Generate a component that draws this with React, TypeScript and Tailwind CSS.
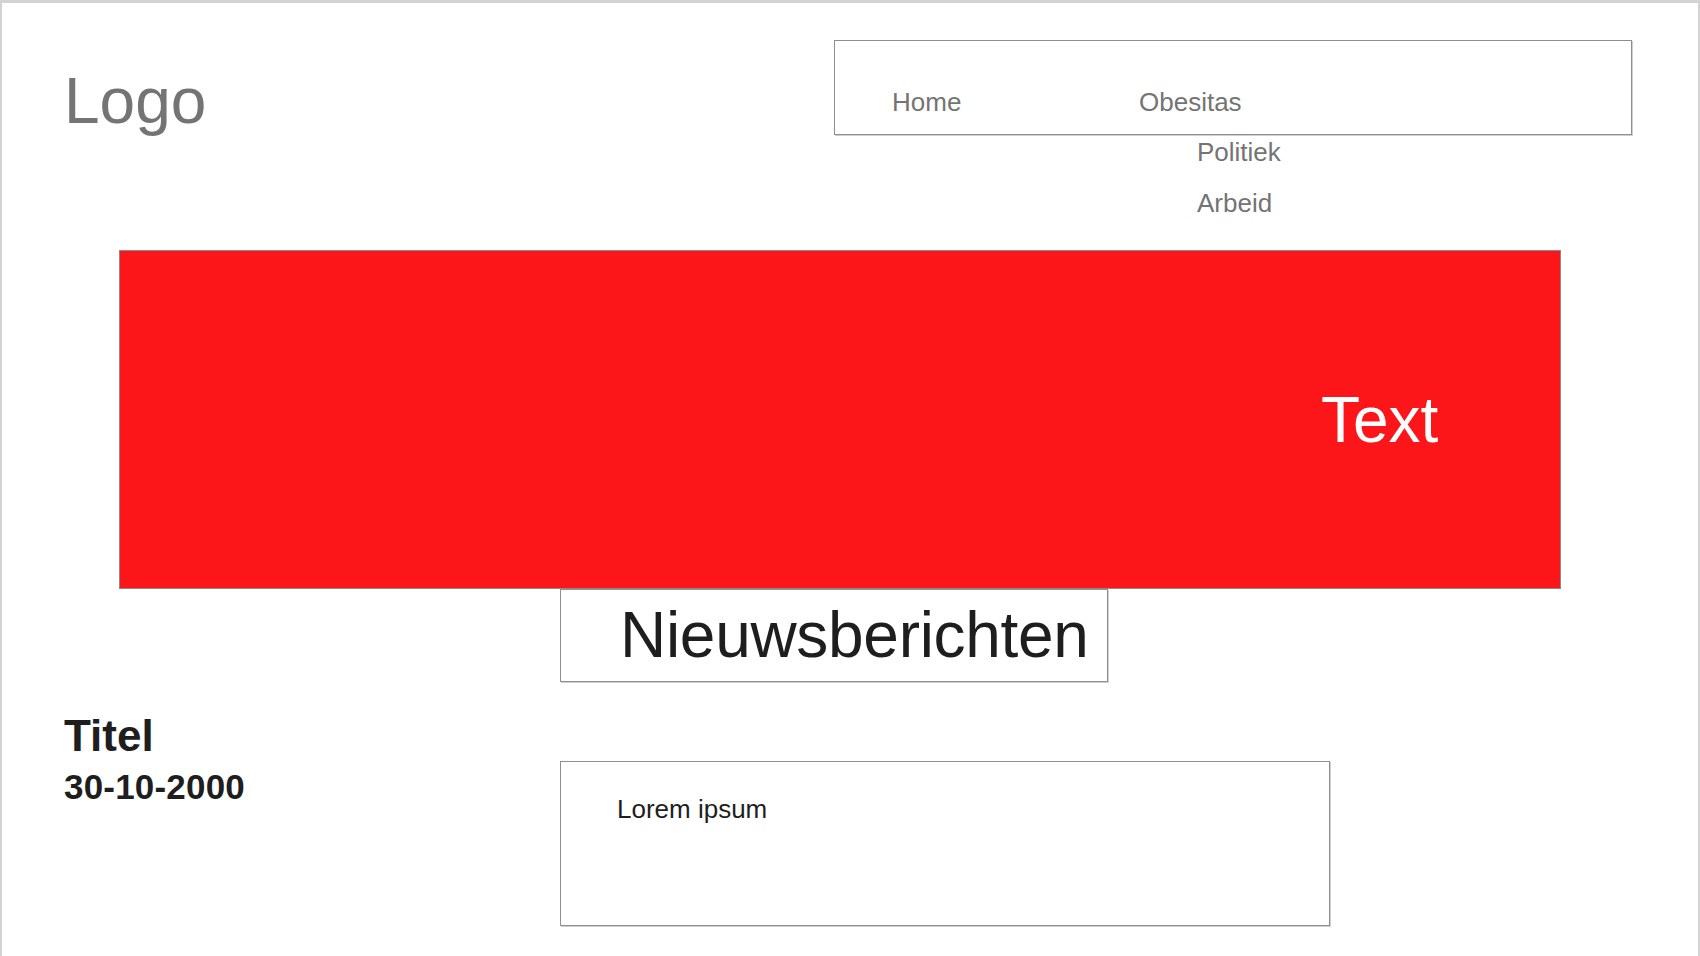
import React from "react";

export default function App() {
  return (
    <div
      className="w-[1700px] h-[956px] overflow-hidden bg-white border-t-[3px] border-l-2 border-r-2 border-[#d3d3d3]"
      style={{ fontFamily: '"Liberation Sans", Arial, Helvetica, sans-serif' }}
    >
      {/* Header */}
      <header className="flex items-start h-[247px]">
        <div className="ml-[62px] mt-[66px] text-[64px] leading-none text-[#747474]">Logo</div>
        <nav className="ml-auto mr-[66px] mt-[37px] w-[798px] h-[95px] border border-[#8e8e8e] shadow-[1px_1px_0_#cfcfcf] pl-[57px] pt-[48px]">
          <ul className="flex text-[26px] leading-none text-[#747474]">
            <li className="w-[247px]">Home</li>
            <li className="relative">
              Obesitas
              <ul className="absolute left-[58px] top-[50px] flex flex-col gap-[25px] whitespace-nowrap">
                <li>Politiek</li>
                <li>Arbeid</li>
              </ul>
            </li>
          </ul>
        </nav>
      </header>

      {/* Banner */}
      <section className="ml-[117px] w-[1442px] h-[339px] bg-[#fd1619] border border-[#8a8a8a] pl-[1201px] pt-[137px]">
        <div className="text-[64px] leading-none text-white">Text</div>
      </section>

      {/* Section title */}
      <div className="ml-[558px] w-[548px] h-[93px] border border-[#8e8e8e] shadow-[1px_1px_0_#cfcfcf] pl-[59px] pt-[13px]">
        <h2 className="text-[64px] leading-none tracking-[-0.3px] text-[#1e1e1e]">Nieuwsberichten</h2>
      </div>

      {/* News item */}
      <div className="flex items-start">
        <div className="ml-[62px] w-[496px] mt-[32px] text-[#1e1e1e]">
          <h3 className="text-[44px] leading-none font-bold">Titel</h3>
          <p className="mt-[11px] text-[35px] leading-none font-bold tracking-[0.2px]">30-10-2000</p>
        </div>
        <div className="mt-[79px] w-[770px] h-[165px] border border-[#8e8e8e] shadow-[1px_1px_0_#cfcfcf] pl-[56px] pt-[34px]">
          <p className="text-[26px] leading-none text-[#1e1e1e]">Lorem ipsum</p>
        </div>
      </div>
    </div>
  );
}
